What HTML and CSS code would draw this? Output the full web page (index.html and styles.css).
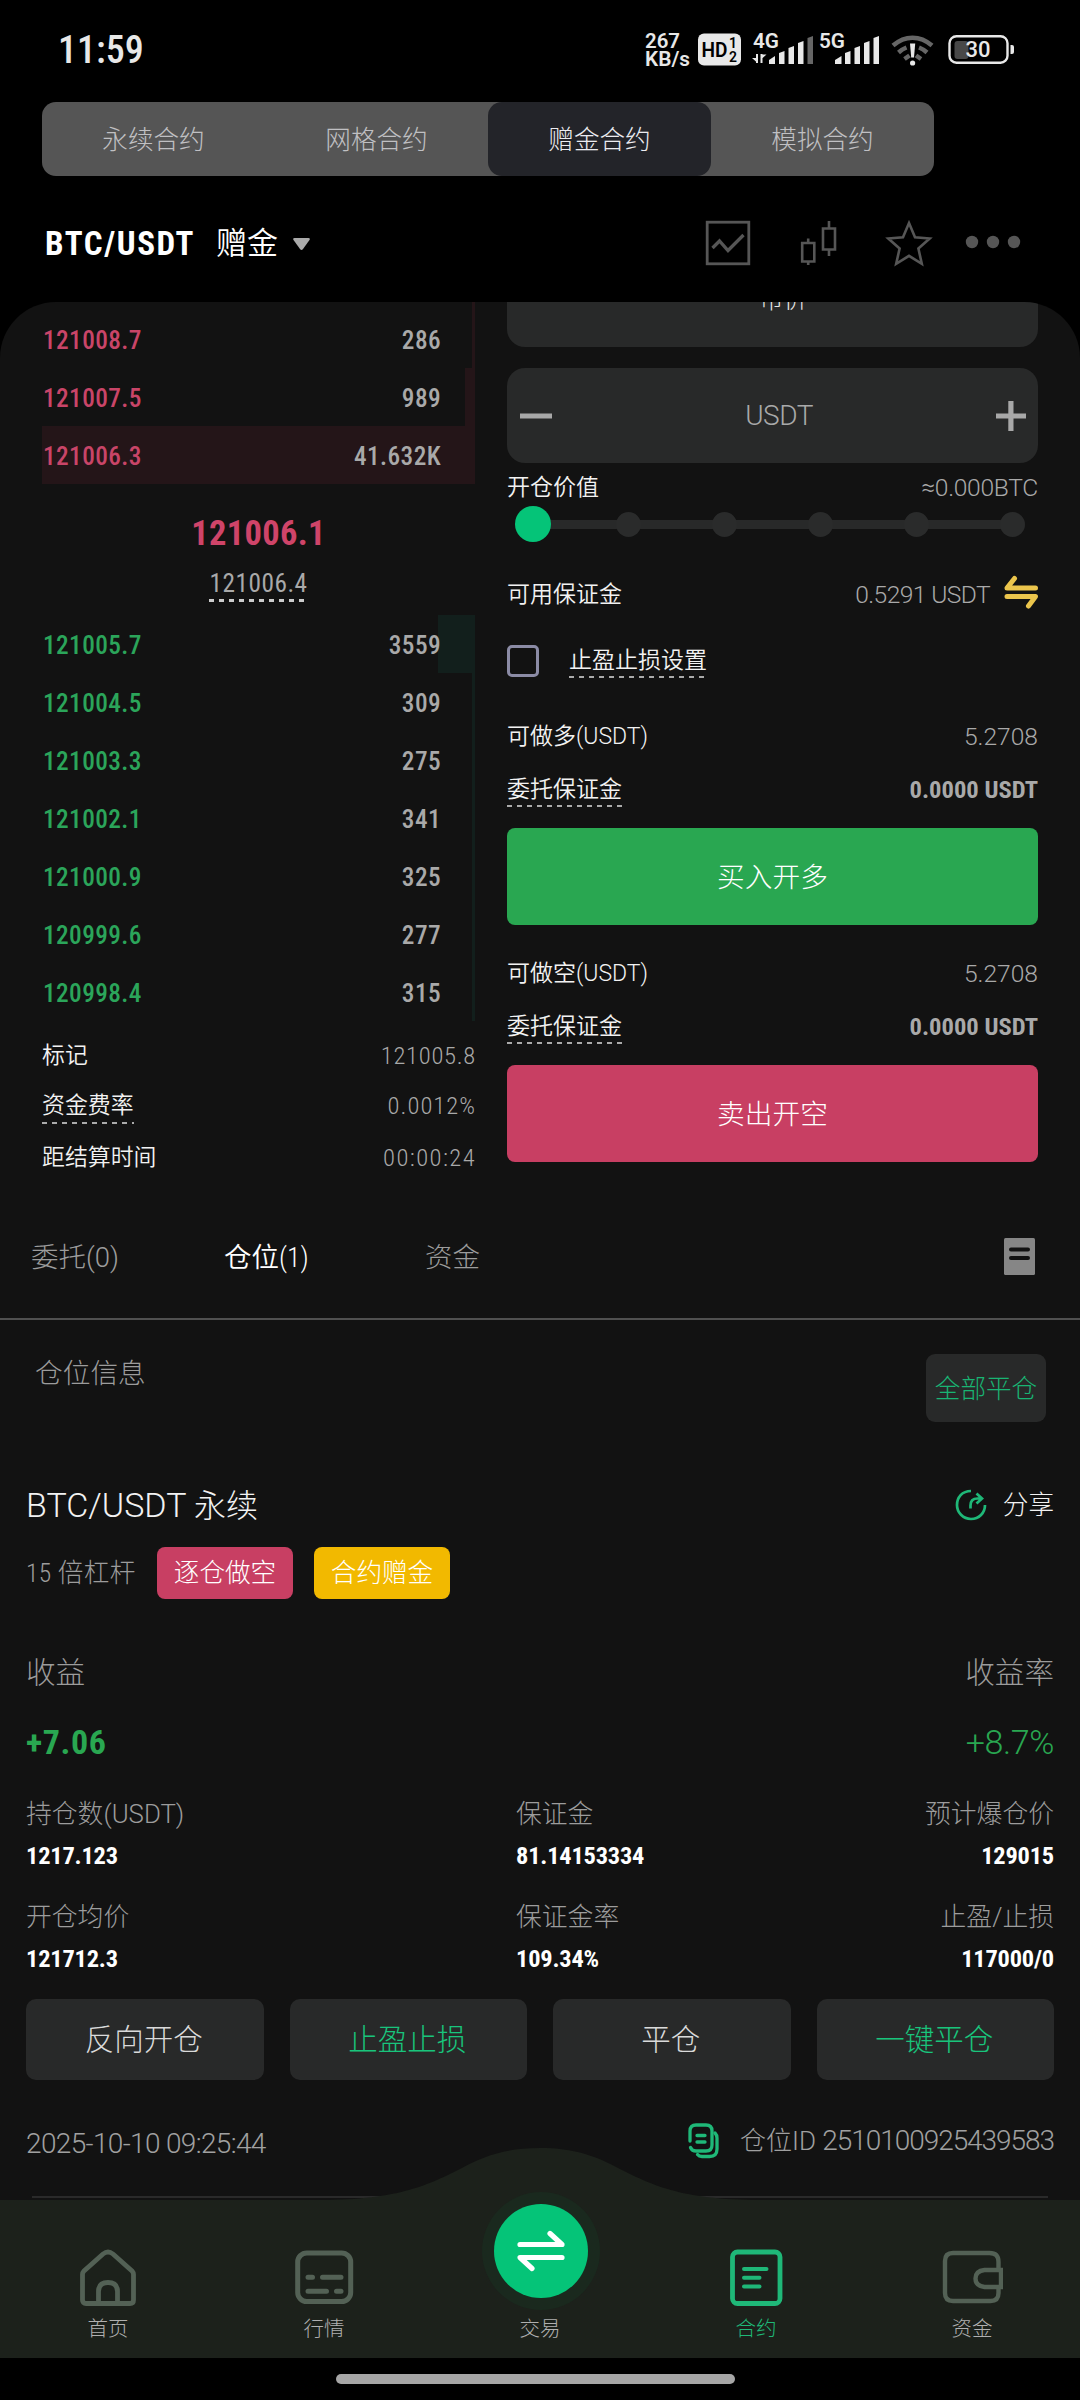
FILE: index.html
```html
<!DOCTYPE html>
<html lang="zh-CN">
<head>
<meta charset="utf-8">
<title>BTC/USDT 赠金</title>
<link rel="stylesheet" href="styles.css">
</head>
<body>
<div class="status">
  <span class="clock">11:59</span>
  <svg class="status-icons" width="400" height="60" viewBox="0 0 400 60" fill="#e8e8e8">
    <g class="st-text">
      <text x="15" y="28" font-size="19.500" textLength="35" lengthAdjust="spacingAndGlyphs">267</text>
      <text x="15" y="46" font-size="19.500" textLength="45" lengthAdjust="spacingAndGlyphs">KB/s</text>
      <rect x="68" y="13.500" width="43" height="32" rx="6"/>
      <g fill="#000">
        <text x="71.500" y="36.500" font-size="19.500" textLength="26" lengthAdjust="spacingAndGlyphs">HD</text>
        <text x="99" y="28" font-size="14">1</text>
        <text x="99" y="42" font-size="14">2</text>
      </g>
      <text x="123" y="28" font-size="20" textLength="26" lengthAdjust="spacingAndGlyphs">4G</text>
      <text x="189" y="28" font-size="20" textLength="26" lengthAdjust="spacingAndGlyphs">5G</text>
    </g>
    <path d="M122 38h5v4.500zM126 34h2v9h-2zM130.500 34h2v9h-2zM131.500 34.500h5l-5 4.500z"/>
    <path d="M139 40l6-4v8h-6zM149 33l5.500-2v13H149zM158.500 28l5.500-2v18h-5.500zM168 23l5.500-2v23H168z"/>
    <path d="M177.500 18l5.500-2v28h-5.500z" fill="#666"/>
    <path d="M205 40l6.500-4v8H205zM215 33l5.500-2v13H215zM224.500 28l5.500-2v18h-5.500zM234 23l5.500-2v23H234zM243.500 18l5.500-2v28h-5.500z"/>
    <g fill="none" stroke="#666" stroke-width="4.500">
      <path d="M263 25.500c12-10.500 27-10.500 39 0"/>
      <path d="M268.500 32.500q4-3.500 8-5M297 32.500q-4-3.500-8-5M274.500 39l5-3.500M291 39l-5-3.500"/>
    </g>
    <path d="M280 23.500h5.200l-1.200 14h-2.800z"/><circle cx="282.600" cy="43" r="2.600"/>
    <rect x="324.500" y="21" width="14" height="18" rx="3" fill="#484848"/>
    <rect x="319.500" y="16.200" width="58" height="26.500" rx="7" fill="none" stroke="#e8e8e8" stroke-width="2.400"/>
    <path d="M380.500 25h1.500q2 0 2 2v5q0 2-2 2h-1.500z"/>
    <text class="st-num" x="335.500" y="37" font-size="22.500" textLength="25" lengthAdjust="spacingAndGlyphs">30</text>
  </svg>
</div>

<div class="modes">
  <span class="mode">永续合约</span><span class="mode">网格合约</span><span class="mode active">赠金合约</span><span class="mode">模拟合约</span>
</div>

<div class="header">
  <b class="pair">BTC/USDT</b><span class="kind">赠金</span>
  <svg class="caret" width="17" height="12" viewBox="0 0 17 12"><path d="M1.500 0h14q2 0 1 2l-6.500 9q-1.500 2-3 0L.5 2q-1-2 1-2z" fill="#aaa"/></svg>
  <svg class="tools" width="350" height="80" viewBox="0 0 350 80" fill="none" stroke="#565656">
    <rect x="17.200" y="17.200" width="41.600" height="41.600" stroke-width="2.800"/>
    <path d="M22.500 43l7-7 8.500 9.500 15.500-15.500" stroke-width="3.300"/>
    <path d="M112.200 38h12.100v18.500h-12.100zM118.200 33.500V38M118.200 56.500V60M133 23.500h12v21h-12zM139 16v7.500M139 44.500v6.500" stroke-width="2.600"/>
    <path d="M219 18l6 14.300 14.700 1.200-11.300 10 3.400 15.300L219 50.800l-12.800 8 3.400-15.300-11.300-10L213 32.300z" stroke-width="2.600"/>
    <g fill="#565656" stroke="none"><circle cx="282" cy="37" r="6.200"/><circle cx="303" cy="37" r="6.200"/><circle cx="324" cy="37" r="6.200"/></g>
  </svg>
</div>

<main class="panel">
  <div class="trade">
    <section class="book">
      <div class="lvl ask"><i style="width:3px"></i></div>
      <div class="lvl ask"><i style="width:3px"></i><span>121008.7</span><em>286</em></div>
      <div class="lvl ask"><i style="width:10px"></i><span>121007.5</span><em>989</em></div>
      <div class="lvl ask"><i style="width:433px"></i><span>121006.3</span><em>41.632K</em></div>
      <div class="mid">
        <b class="last">121006.1</b>
        <span class="index dash bold-dash">121006.4</span>
      </div>
      <div class="lvl bid"><i style="width:37px"></i><span>121005.7</span><em>3559</em></div>
      <div class="lvl bid"><i style="width:3px"></i><span>121004.5</span><em>309</em></div>
      <div class="lvl bid"><i style="width:3px"></i><span>121003.3</span><em>275</em></div>
      <div class="lvl bid"><i style="width:3px"></i><span>121002.1</span><em>341</em></div>
      <div class="lvl bid"><i style="width:3px"></i><span>121000.9</span><em>325</em></div>
      <div class="lvl bid"><i style="width:3px"></i><span>120999.6</span><em>277</em></div>
      <div class="lvl bid"><i style="width:3px"></i><span>120998.4</span><em>315</em></div>
      <div class="meta first"><span>标记</span><em>121005.8</em></div>
      <div class="meta"><span class="dash">资金费率</span><em>0.0012%</em></div>
      <div class="meta last-meta"><span>距结算时间</span><em>00:00:24</em></div>
    </section>

    <section class="form">
      <div class="box market">市价</div>
      <div class="box amount">
        <svg width="32" height="30" viewBox="0 0 32 30"><path d="M0 12.500h32v5H0z" fill="#a8a8a8"/></svg>
        <span>USDT</span>
        <svg width="30" height="30" viewBox="0 0 30 30"><path d="M0 12.500h12.300V0h5.200v12.500H30v5H17.500V30h-5.200V17.500H0z" fill="#a8a8a8"/></svg>
      </div>
      <div class="row value"><span>开仓价值</span><em>≈0.000BTC</em></div>
      <div class="slider"><i class="knob"></i><i></i><i></i><i></i><i></i><i></i></div>
      <div class="row avail"><span>可用保证金</span><em>0.5291 USDT</em>
        <svg width="34" height="34" viewBox="0 0 34 34" fill="none" stroke="#ebc54c" stroke-width="5" stroke-linecap="round" stroke-linejoin="round"><path d="M31.500 13H3l7.500-9.500M3 21.500h28.500l-7 9.500"/></svg>
      </div>
      <div class="tpsl"><i class="check"></i><span class="dash">止盈止损设置</span></div>
      <div class="row max"><span>可做多(USDT)</span><em>5.2708</em></div>
      <div class="row cost"><span class="dash">委托保证金</span><b>0.0000 USDT</b></div>
      <div class="btn buy">买入开多</div>
      <div class="row max second"><span>可做空(USDT)</span><em>5.2708</em></div>
      <div class="row cost"><span class="dash">委托保证金</span><b>0.0000 USDT</b></div>
      <div class="btn sell">卖出开空</div>
    </section>
  </div>

  <div class="tabs">
    <span>委托(0)</span><span class="on">仓位(1)</span><span>资金</span>
    <svg width="31" height="37" viewBox="0 0 31 37"><rect width="31" height="37" rx="1.500" fill="#868686"/><path d="M7 11.500h17M7 20h17" stroke="#121212" stroke-width="4" stroke-linecap="round"/></svg>
  </div>

  <div class="info"><span>仓位信息</span><span class="close-all">全部平仓</span></div>

  <section class="position">
    <div class="pos-head">
      <span class="pos-name">BTC/USDT <span>永续</span></span>
      <span class="share"><svg width="34" height="34" viewBox="0 0 34 34" fill="none" stroke="#1fb878" stroke-width="2.700"><path d="M17 3C8 3 3 9.500 3 17s6 14 14 14 14-6 14-14"/><path d="M16.500 20.500v-3q0-7 7-7h4.500M22.500 5.500l5.500 5-5.500 5"/></svg>分享</span>
    </div>
    <div class="tags"><span class="lever">15 倍杠杆</span><span class="tag short">逐仓做空</span><span class="tag bonus">合约赠金</span></div>
    <div class="pl-label"><span>收益</span><span>收益率</span></div>
    <div class="pl-value"><b>+7.06</b><span>+8.7%</span></div>
    <div class="stats">
      <div><span>持仓数(USDT)</span><b>1217.123</b></div>
      <div><span>保证金</span><b>81.14153334</b></div>
      <div><span>预计爆仓价</span><b>129015</b></div>
      <div><span>开仓均价</span><b>121712.3</b></div>
      <div><span>保证金率</span><b>109.34%</b></div>
      <div><span>止盈/止损</span><b>117000/0</b></div>
    </div>
    <div class="actions"><span>反向开仓</span><span class="hl">止盈止损</span><span>平仓</span><span class="hl">一键平仓</span></div>
    <div class="foot">
      <span class="date">2025-10-10 09:25:44</span>
      <svg width="31" height="36" viewBox="0 0 31 36" fill="none" stroke="#1fb878" stroke-width="3.300" stroke-linecap="round"><path d="M2 18V8q0-6 6-6h10q6 0 6 6v14q0 6-6 6H8q-4 0-5.500-3.500"/><path d="M27 10q2 2 2 5v11q0 7.500-7.500 7.500H14q-3 0-4.500-2"/><path d="M9 12.500h8M9 19h8"/></svg>
      <span class="pid">仓位ID <span>2510100925439583</span></span>
    </div>
    <div class="rule"></div>
  </section>

  <nav class="nav">
    <svg class="hump" width="1080" height="210" viewBox="0 0 1080 210"><path d="M0 52H320C400 52 430 36 462 20C484 8 506 0 540 0C574 0 596 8 618 20C650 36 680 52 760 52H1080V210H0z" fill="#1c211b"/><circle cx="541" cy="103" r="59" fill="#1a291e"/></svg>
    <div class="nav-items">
      <div class="nav-item"><svg width="60" height="60" viewBox="0 0 60 60" fill="none" stroke="#536155" stroke-width="4.800"><path d="M4.500 26.500q0-2 1.500-3.600L25 6q5-4 10 0l19 16.900q1.500 1.600 1.500 3.600V52q0 3.500-3.500 3.500H8q-3.500 0-3.500-3.500z"/><path d="M20.500 55V43.500q0-9 9.500-9t9.500 9V55"/></svg>首页</div>
      <div class="nav-item"><svg width="60" height="60" viewBox="0 0 60 60" fill="none" stroke="#536155" stroke-width="5" stroke-linecap="round"><rect x="3.700" y="5" width="53" height="48.500" rx="9"/><path d="M14 29.300h4.500M28.500 29.300H47M14 43.200h18.500M42.500 43.200H47"/></svg>行情</div>
      <div class="nav-item center"><span class="swap"><svg width="48" height="44" viewBox="0 0 48 44" fill="none" stroke="#fff" stroke-width="5.200" stroke-linecap="round" stroke-linejoin="round"><path d="M3 15.500h42L33 4.500M45 28.500H3l12 11"/></svg></span>交易</div>
      <div class="nav-item sel"><svg width="60" height="60" viewBox="0 0 60 60" fill="none" stroke="#1fb878" stroke-width="4.800" stroke-linecap="round"><rect x="6.500" y="4" width="47.500" height="51.500" rx="5"/><path stroke-width="4" d="M18 21h22.500M18 29.700h15.500M18 38.500h15.500"/></svg>合约</div>
      <div class="nav-item"><svg width="62" height="60" viewBox="0 0 62 60" fill="none" stroke="#536155" stroke-width="4.400"><path d="M57.500 22v-8q0-9-9-9H12q-8 0-8 8v32q0 8 8 8h37.500q8 0 8-8v-5.500"/><path d="M60 22H43.500q-9 1-9 8.500t9 8.500H60z"/></svg>资金</div>
    </div>
  </nav>
</main>
<div class="home"><i></i></div>
</body>
</html>
```
FILE: styles.css
```css
* { box-sizing: border-box; }
body {
  margin: 0; width: 1080px; height: 2400px; overflow: hidden;
  display: flex; flex-direction: column;
  background: #000; color: #a9a9a9;
  font-family: Roboto, "Noto Sans CJK SC", sans-serif;
  font-weight: 300; font-stretch: 100%; line-height: 1.2; white-space: nowrap;
}
em, i { font-style: normal; }
svg { flex: none; display: block; }
b { font-weight: 700; font-stretch: 75%; }

.status { height: 102px; flex: none; display: flex; justify-content: space-between; padding: 20px 50px 0 58px; }
.clock { font-size: 38px; font-weight: 500; font-stretch: 75%; line-height: 61px; color: #e8e8e8; }
.st-text { font-weight: 600; font-stretch: 100%; }
.st-num { font-weight: 500; }

.modes { height: 74px; flex: none; width: 892px; margin-left: 42px; display: flex; background: #555; border-radius: 14px; }
.mode { flex: 1; display: flex; align-items: center; justify-content: center; padding-top: 2px; font-size: 25.600px; color: #c0c0c3; }
.mode.active { background: #232429; border-radius: 14px; color: #ececf0; }

.header { height: 126px; flex: none; display: flex; align-items: center; padding: 9px 40px 0 45px; color: #fff; }
.pair { font-size: 33px; letter-spacing: 1.600px; width: 171px; }
.kind { font-size: 31px; font-weight: 350; width: 77px; }
.tools { margin-left: auto; margin-top: 3px; }

.panel { height: 2056px; flex: none; position: relative; overflow: hidden; background: #121212; border-radius: 56px 56px 0 0; }
.trade { display: flex; gap: 32px; margin-top: -50px; padding-left: 42px; height: 944px; }

.book { width: 433px; }
.lvl { height: 58px; position: relative; display: flex; align-items: center; justify-content: space-between; padding: 4px 34px 0 1px; font-size: 25.300px; font-weight: 500; font-stretch: 75%; letter-spacing: .4px; }
.lvl i { position: absolute; right: 0; top: 0; bottom: 0; }
.lvl span, .lvl em { position: relative; }
.lvl em { color: #a9a9a9; }
.ask { color: #c94568; }
.ask i { background: #241518; }
.bid { color: #2ba55a; }
.bid i { background: #121f1c; }
.mid { height: 131px; display: flex; flex-direction: column; align-items: center; padding-top: 27px; }
.last { font-size: 34.500px; letter-spacing: .3px; line-height: 44px; color: #cf4469; }
.index { font-size: 25.300px; font-weight: 400; font-stretch: 75%; letter-spacing: .5px; line-height: 32px; margin-top: 13px; padding-bottom: 2px; }
.dash { background: repeating-linear-gradient(90deg, #aaa 0 5px, transparent 5px 10px) left bottom / 100% 2px no-repeat; }
.bold-dash { background: repeating-linear-gradient(90deg, #ccc 0 5px, transparent 5px 10px) left bottom / 100% 3px no-repeat; }
.meta { height: 50px; display: flex; align-items: center; justify-content: space-between; padding-top: 3px; font-size: 24.600px; font-stretch: 75%; }
.meta span { color: #f2f2f2; font-size: 22.900px; font-weight: 350; line-height: 36px; }
.meta em { letter-spacing: 1px; margin-right: -1px; }
.meta.first { margin-top: 10px; height: 46px; margin-bottom: 2px; }
.meta.first em { letter-spacing: .7px; }
.last-meta { height: 54px; }
.last-meta em { letter-spacing: 1.400px; }

.form { width: 531px; }
.box { height: 95px; background: #282929; border-radius: 18px; display: flex; align-items: center; }
.market { justify-content: center; padding: 2px 0 0 22px; font-size: 24px; color: #e8e8e8; }
.amount { margin-top: 21px; justify-content: space-between; padding: 0 12px 0 13px; font-size: 28px; letter-spacing: -.5px; }
.amount span { padding-left: 10px; }
.row { height: 47px; display: flex; align-items: center; justify-content: space-between; padding-top: 2px; font-size: 24.600px; }
.row span, .tpsl span { color: #f2f2f2; font-size: 23px; font-weight: 350; line-height: 34px; }
.row b { font-size: 24.600px; }
.value em { letter-spacing: -.3px; }
.avail em { letter-spacing: -.6px; margin-left: auto; margin-right: 14px; }
.slider { height: 28px; display: flex; align-items: center; justify-content: space-between; padding: 0 13px 0 14px; margin: 0 0 32px; background: linear-gradient(#282929, #282929) 36px 10px / 470px 9px no-repeat; }
.slider i { width: 25px; height: 25px; border-radius: 50%; background: #2a2b2b; }
.slider .knob { width: 36px; height: 36px; margin: 0 -6px; background: #05c478; }
.avail svg { margin-top: -5px; }
.tpsl { height: 36px; margin-top: 26px; display: flex; align-items: center; gap: 30px; }
.check { width: 32px; height: 32px; border: 3px solid #8b8ba5; border-radius: 5px; }
.max { margin-top: 34px; height: 46px; }
.max.second { margin-top: 25px; }
.cost { margin-top: 6px; }
.btn { height: 97px; margin-top: 16px; padding-top: 2px; border-radius: 8px; display: flex; align-items: center; justify-content: center; color: #fff; font-size: 27.700px; }
.buy { background: #29a751; }
.sell { background: #c83f63; }

.tabs { height: 124px; display: flex; align-items: center; padding: 0 45px 0 31px; border-bottom: 2px solid #505050; font-size: 27.500px; color: #9c9c9c; }
.tabs span { padding-top: 1px; }
.tabs .on { width: 201px; margin-left: 105px; color: #fff; font-weight: 350; font-stretch: 75%; }
.tabs svg { margin-left: auto; margin-top: -1px; }
.info { height: 102px; display: flex; justify-content: space-between; padding: 34px 34px 0 35px; font-size: 27.700px; line-height: 40px; color: #9c9c9c; }
.close-all { width: 120px; height: 68px; border-radius: 9px; background: #282929; color: #19b473; font-size: 25.600px; line-height: 70px; text-align: center; }

.position { padding: 54px 26px 0; }
.pos-head { height: 58px; display: flex; align-items: center; justify-content: space-between; color: #f2f2f2; }
.pos-name { font-size: 34px; }
.pos-name span { font-size: 32px; }
.share { display: flex; align-items: center; gap: 15px; font-size: 25.600px; }
.tags { height: 78px; display: flex; align-items: center; font-size: 25.600px; color: #9c9c9c; }
.lever { width: 131px; font-stretch: 75%; letter-spacing: .4px; }
.tag { width: 136px; height: 52px; line-height: 53px; border-radius: 8px; text-align: center; color: #fff; margin-right: 21px; }
.short { background: #c83f63; }
.bonus { background: #f2b900; }
.pl-label { height: 60px; margin-top: 32px; display: flex; align-items: center; justify-content: space-between; font-size: 29.600px; color: #9c9c9c; }
.pl-value { height: 60px; margin-top: 8px; display: flex; align-items: center; justify-content: space-between; font-size: 34px; color: #29a751; }
.pl-value b { letter-spacing: .6px; }
.pl-value span { letter-spacing: -.4px; }
.stats { display: grid; grid-template-columns: 490px 1fr auto; margin-top: 22px; row-gap: 19px; }
.stats div { display: flex; flex-direction: column; height: 84px; font-size: 25.800px; line-height: 41px; color: #9c9c9c; }
.stats div:nth-child(3n) { align-items: flex-end; }
.stats b { color: #fff; font-size: 24.400px; line-height: 42px; letter-spacing: -.2px; }
.actions { margin-top: 18px; display: grid; grid-template-columns: repeat(4, 1fr); gap: 26px; }
.actions span { height: 81px; padding-right: 2px; border-radius: 10px; background: #282929; color: #dadada; font-size: 29.500px; line-height: 83px; text-align: center; }
.actions .hl { color: #19c47c; }
.foot { height: 62px; margin-top: 30px; display: flex; align-items: center; font-size: 28px; color: #a0a0a0; }
.date { margin-right: auto; padding-top: 5px; letter-spacing: -.65px; }
.pid { margin-left: 21px; font-size: 26px; }
.pid span { font-size: 28px; letter-spacing: -1.050px; }
.rule { margin: 24px 6px 0; height: 2px; background: #2a2a2a; }

.nav { position: absolute; left: 0; right: 0; bottom: 0; height: 210px; }
.hump { position: absolute; left: 0; top: 0; }
.nav-items { position: relative; display: grid; grid-template-columns: repeat(5, 1fr); padding-top: 100px; }
.nav-item { height: 96px; display: flex; flex-direction: column; align-items: center; justify-content: space-between; font-size: 20.500px; line-height: 30px; color: #b0b0b0; }
.center { margin-top: -44px; height: 140px; }
.swap { width: 94px; height: 94px; margin-left: 2px; border-radius: 50%; background: #05c478; display: flex; align-items: center; justify-content: center; }
.sel { color: #1fb878; }
.home { flex: 1; display: flex; justify-content: center; padding: 16px 9px 0 0; }
.home i { width: 399px; height: 10px; border-radius: 5px; background: #a6a6a6; }
```
